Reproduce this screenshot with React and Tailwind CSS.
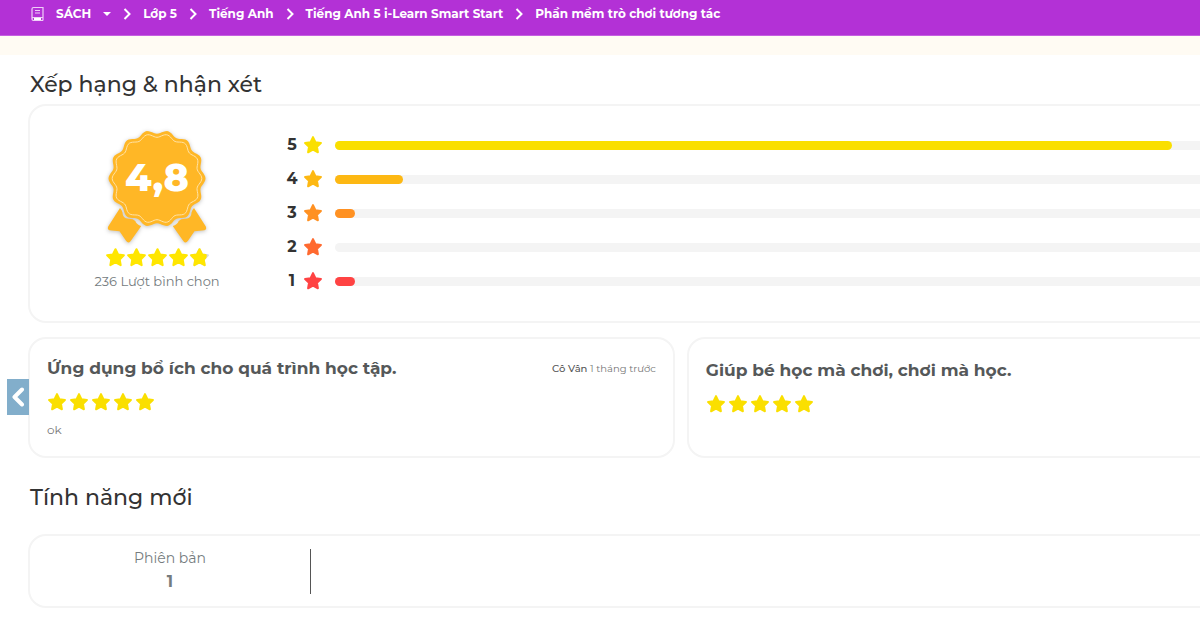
import React from "react";

const STAR =
  "M12 2.6L14.940 8.550 21.510 9.510 16.760 14.150 17.880 20.690 12 17.600 6.120 20.690 7.240 14.150 2.490 9.510 9.060 8.550Z";

function Star({ className }) {
  return (
    <svg viewBox="0 0 24 24" className={className} fill="currentColor" stroke="currentColor" strokeWidth="2.4" strokeLinejoin="round" aria-hidden="true">
      <path d={STAR} />
    </svg>
  );
}

function PartialStar({ className }) {
  return (
    <svg viewBox="0 0 24 24" className={className} strokeWidth="2.4" strokeLinejoin="round" aria-hidden="true">
      <defs>
        <clipPath id="star-part">
          <rect x="0" y="0" width="20" height="24" />
        </clipPath>
      </defs>
      <path d={STAR} fill="#d9d9d9" stroke="#d9d9d9" />
      <path d={STAR} fill="currentColor" stroke="currentColor" clipPath="url(#star-part)" />
    </svg>
  );
}

function scallop(cx, cy, r, depth, lobes) {
  const points = [];
  for (let i = 0; i < 360; i += 2) {
    const a = (i * Math.PI) / 180;
    const rr = r + depth * Math.cos(lobes * a);
    points.push(`${(cx + rr * Math.cos(a)).toFixed(2)} ${(cy + rr * Math.sin(a)).toFixed(2)}`);
  }
  return `M${points.join("L")}Z`;
}

const RIBBON =
  "M17 78L5.200 96.500Q4 99.500 6.500 100.200L16.500 101.200 23 110.800Q25.300 114 27.500 111.200L38.300 96Q33.500 94.500 32.300 91Q30 88.500 25.500 88.700Q19.500 88.500 19.500 82.500Q19 80 17 78Z";

function Badge() {
  return (
    <div className="relative h-[116px] w-[108px]">
      <svg viewBox="0 0 108 116" className="h-full w-full drop-shadow-[0_1px_2px_rgba(0,0,0,0.25)]" aria-hidden="true">
        <path d={RIBBON} fill="#ffb726" />
        <path d={RIBBON} fill="#ffb726" transform="translate(108 0) scale(-1 1)" />
        <path d={scallop(54, 48.5, 46.6, 1.9, 14)} fill="#ffb726" />
        <path d={scallop(54, 48.5, 43, 1.8, 14)} fill="none" stroke="#ffe3a6" strokeWidth="1" />
      </svg>
      <span className="absolute inset-x-0 top-6 text-center text-[38px] leading-[48px] font-extrabold text-white">
        4,8
      </span>
    </div>
  );
}

function Chevron() {
  return (
    <svg viewBox="0 0 8 12" className="h-3 w-2 shrink-0" fill="none" stroke="currentColor" strokeWidth="2" aria-hidden="true">
      <path d="M1.500 1L6.500 6l-5 5" />
    </svg>
  );
}

const crumbs = ["Lớp 5", "Tiếng Anh", "Tiếng Anh 5 i-Learn Smart Start", "Phần mềm trò chơi tương tác"];

const ratings = [
  { n: 5, share: 87.5, star: "text-[#fadf00]", bar: "bg-[#fadf00]" },
  { n: 4, share: 7.1, star: "text-[#fdb813]", bar: "bg-[#fdb813]" },
  { n: 3, share: 2.1, star: "text-[#ff9122]", bar: "bg-[#ff9122]" },
  { n: 2, share: 0, star: "text-[#ff6a30]", bar: "bg-[#ff6a30]" },
  { n: 1, share: 2.1, star: "text-[#ff4343]", bar: "bg-[#ff4343]" },
];

function FiveStars() {
  return (
    <div className="flex gap-0.5 text-[#fadf00]" role="img" aria-label="5">
      {[1, 2, 3, 4, 5].map((i) => (
        <Star key={i} className="size-5" />
      ))}
    </div>
  );
}

export default function App() {
  return (
    <div className="overflow-hidden bg-white font-['Montserrat','Inter',sans-serif] text-[#333]">
      <nav className="flex h-9 items-start border-b border-[#c55fe0] bg-[#b331d6] pt-1 pl-[29px] text-[12px] leading-5 font-bold text-white">
        <a href="#sach" className="flex items-center">
          <svg viewBox="0 0 14 16" className="mr-3 ml-px h-4 w-3.5" fill="none" stroke="#efcff7" strokeWidth="1.200" aria-hidden="true">
            <path d="M13 11.500V1.500H3.500Q2 1.500 2 3V13Q2 14.500 3.500 14.500H13M2 12.800Q2 11.500 3.500 11.500H13V14.500M5 4.500H10M5 7H10" />
            <path d="M4 13H11" stroke="#fff" strokeWidth="2" />
          </svg>
          SÁCH
        </a>
        <button type="button" aria-label="Menu" className="ml-3 flex h-5 items-center">
          <svg viewBox="0 0 8 4" className="h-1 w-2" fill="currentColor" aria-hidden="true">
            <path d="M0 0h8L4 4z" />
          </svg>
        </button>
        <ol className="flex">
          {crumbs.map((c) => (
            <li key={c} className="flex items-center gap-3 pl-3">
              <Chevron />
              <a href="#crumb" className="whitespace-nowrap">{c}</a>
            </li>
          ))}
        </ol>
      </nav>
      <div className="h-[19px] bg-[#fffbf3]" />
      <main className="pb-5 pl-7">
        <div className="w-[111.4%]">
          <h2 className="pt-3.5 pl-0.5 text-[22px] leading-8 font-medium">Xếp hạng &amp; nhận xét</h2>
          <section className="mt-[3px] flex h-[219px] rounded-[18px] border-2 border-[#f4f4f4] pt-6">
            <div className="flex w-[254px] shrink-0 flex-col items-center">
              <Badge />
              <div className="mt-px flex text-[#ffe600]">
                {[1, 2, 3, 4].map((i) => (
                  <Star key={i} className="size-[21px]" />
                ))}
                <PartialStar className="size-[21px]" />
              </div>
              <p className="mt-px text-[13px] leading-6 text-[#757c7e]">236 Lượt bình chọn</p>
            </div>
            <ul className="-mt-0.5 flex-1 pr-10 pl-px">
              {ratings.map((r) => (
                <li key={r.n} className="flex h-[34px] items-center">
                  <span className="w-3.5 text-center text-[16px] leading-6 font-bold">{r.n}</span>
                  <Star className={`mr-3 ml-1 size-5 ${r.star}`} />
                  <div className="h-[9px] flex-1 rounded-full bg-[#f4f4f4]">
                    <div className={`h-full rounded-full ${r.bar}`} style={{ width: `${r.share}%` }} />
                  </div>
                </li>
              ))}
            </ul>
          </section>
          <section className="relative mt-3.5 flex gap-3">
            <article className="h-[121px] flex-1 rounded-[18px] border-2 border-[#f4f4f4] px-[17px] pt-[15px]">
              <div className="flex items-center justify-between">
                <h3 className="text-[17px] leading-7 font-bold text-[#555859]">Ứng dụng bổ ích cho quá trình học tập.</h3>
                <p className="text-[10px] text-[#777]">
                  <b className="font-medium text-[#555]">Cô Vân</b> 1 tháng trước
                </p>
              </div>
              <div className="mt-2.5">
                <FiveStars />
              </div>
              <p className="mt-2 text-[12px] leading-5 text-[#777]">ok</p>
            </article>
            <article className="h-[121px] flex-1 rounded-[18px] border-2 border-[#f4f4f4] px-[17px] pt-[17px]">
              <div className="flex items-start justify-between">
                <h3 className="text-[17px] leading-7 font-bold text-[#555859]">Giúp bé học mà chơi, chơi mà học.</h3>
                <span className="mt-[3px] h-2 w-[115px] border-l border-[#aaa]" />
              </div>
              <div className="mt-2.5">
                <FiveStars />
              </div>
            </article>
            <button
              type="button"
              aria-label="Previous"
              className="absolute top-[42px] -left-[21px] flex h-9 w-[22px] items-center justify-center bg-[#82aecb] text-white"
            >
              <svg viewBox="0 0 14 20" className="h-5 w-3.5" fill="none" stroke="currentColor" strokeWidth="4" strokeLinecap="round" strokeLinejoin="round" aria-hidden="true">
                <path d="M11 2.500L3.500 10l7.500 7.500" />
              </svg>
            </button>
          </section>
          <h2 className="mt-6 pl-0.5 text-[22px] leading-8 font-medium">Tính năng mới</h2>
          <section className="mt-5 flex h-[74px] items-center rounded-[18px] border-2 border-[#f4f4f4]">
            <div className="flex h-[45px] w-[281px] flex-col items-center justify-center border-r border-[#555] pb-0.5 text-[#757c7e]">
              <p className="text-[14px] leading-6">Phiên bản</p>
              <p className="text-[16px] leading-6 font-bold">1</p>
            </div>
          </section>
        </div>
      </main>
    </div>
  );
}
